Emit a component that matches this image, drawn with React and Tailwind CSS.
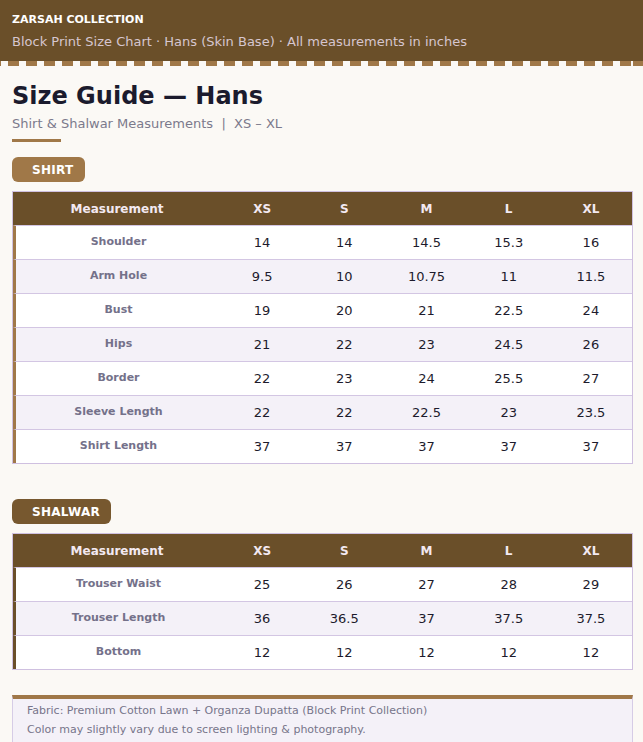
import React from 'react';

const sizes = ['XS', 'S', 'M', 'L', 'XL'];

const shirt = [
  ['Shoulder', '14', '14', '14.5', '15.3', '16'],
  ['Arm Hole', '9.5', '10', '10.75', '11', '11.5'],
  ['Bust', '19', '20', '21', '22.5', '24'],
  ['Hips', '21', '22', '23', '24.5', '26'],
  ['Border', '22', '23', '24', '25.5', '27'],
  ['Sleeve Length', '22', '22', '22.5', '23', '23.5'],
  ['Shirt Length', '37', '37', '37', '37', '37'],
];

const shalwar = [
  ['Trouser Waist', '25', '26', '27', '28', '29'],
  ['Trouser Length', '36', '36.5', '37', '37.5', '37.5'],
  ['Bottom', '12', '12', '12', '12', '12'],
];

const SizeTable = ({ rows, accent }) => (
  <div className="border border-[#cfc0e0]">
    <div className="grid grid-cols-[208px_repeat(5,1fr)] h-[33px] items-center bg-[#6a4f29] text-[12px] font-bold text-[#f3e9f1]">
      <div className="text-center">Measurement</div>
      {sizes.map((s) => (
        <div key={s} className="text-center">{s}</div>
      ))}
    </div>
    {rows.map((r, i) => (
      <div
        key={r[0]}
        className={`grid grid-cols-[205px_repeat(5,1fr)] h-[34px] items-center border-t border-[#d3c6e3] border-l-[3px] ${accent} ${i % 2 ? 'bg-[#f4f1f8]' : 'bg-white'}`}
      >
        <div className="text-center text-[11px] font-bold text-[#74718a]">{r[0]}</div>
        {r.slice(1).map((v, j) => (
          <div key={j} className="text-center text-[13px] text-[#1d1b2c]">{v}</div>
        ))}
      </div>
    ))}
  </div>
);

export default function App() {
  return (
    <div className="min-h-screen bg-[#fbf9f5] font-['DejaVu_Sans',sans-serif]">
      {/* Header */}
      <div className="bg-[#6a4f29] px-3 pt-[13px] h-[61px]">
        <div className="text-[11px] font-bold text-white leading-[14px]">ZARSAH COLLECTION</div>
        <div className="mt-[7px] text-[13px] text-[#d6c6cf] leading-[16px]">
          Block Print Size Chart · Hans (Skin Base) · All measurements in inches
        </div>
      </div>
      <div className="h-[5px] bg-[repeating-linear-gradient(90deg,#a07848_0px,#a07848_11px,transparent_11px,transparent_18px)] bg-[position:-10px_0]"></div>

      <div className="pl-3 pr-[10px]">
        <h1 className="mt-[15px] text-[24px] font-bold text-[#1b1b2d] leading-[30px]">Size Guide — Hans</h1>
        <div className="mt-[5px] text-[13px] text-[#7b7a8c] leading-[16px]">
          Shirt &amp; Shalwar Measurements&nbsp;&nbsp;|&nbsp;&nbsp;XS – XL
        </div>
        <div className="mt-[7px] w-[49px] h-[3px] bg-[#a07848]"></div>

        <div className="mt-[15px] inline-flex h-[25px] items-center rounded-md bg-[#a07848] pl-5 pr-[11px] text-[12px] font-bold tracking-wide text-white">
          SHIRT
        </div>
        <div className="mt-[9px]">
          <SizeTable rows={shirt} accent="border-l-[#a07848]" />
        </div>

        <div className="mt-[35px] inline-flex h-[25px] items-center rounded-md bg-[#77582f] pl-5 pr-[11px] text-[12px] font-bold tracking-wide text-white">
          SHALWAR
        </div>
        <div className="mt-[9px]">
          <SizeTable rows={shalwar} accent="border-l-[#6a4f29]" />
        </div>

        <div className="mt-[25px] border-t-4 border-t-[#a07848] border-x border-x-[#d6cce6] bg-[#f4f1f8] px-[14px] pt-[2px] pb-4 text-[11px] leading-[19px] text-[#77758a]">
          <div>Fabric: Premium Cotton Lawn + Organza Dupatta (Block Print Collection)</div>
          <div>Color may slightly vary due to screen lighting &amp; photography.</div>
        </div>
      </div>
    </div>
  );
}
